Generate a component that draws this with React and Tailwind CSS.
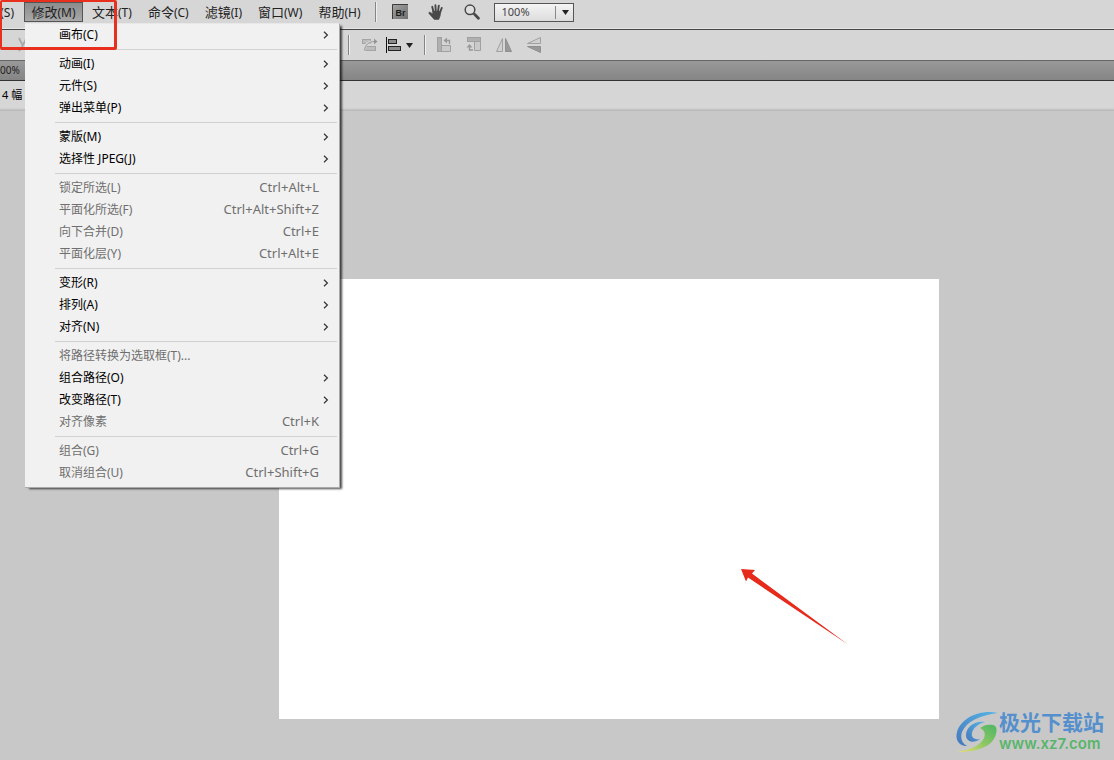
const menus = [
    ["文本", "(T)"],
    ["命令", "(C)"],
    ["滤镜", "(I)"],
    ["窗口", "(W)"],
    ["帮助", "(H)"],
];

const modifyGroups = [
    [{ label: "画布(C)", sub: true }],
    [
        { label: "动画(I)", sub: true },
        { label: "元件(S)", sub: true },
        { label: "弹出菜单(P)", sub: true },
    ],
    [
        { label: "蒙版(M)", sub: true },
        { label: "选择性 JPEG(J)", sub: true },
    ],
    [
        { label: "锁定所选(L)", keys: "Ctrl+Alt+L", disabled: true },
        { label: "平面化所选(F)", keys: "Ctrl+Alt+Shift+Z", disabled: true },
        { label: "向下合并(D)", keys: "Ctrl+E", disabled: true },
        { label: "平面化层(Y)", keys: "Ctrl+Alt+E", disabled: true },
    ],
    [
        { label: "变形(R)", sub: true },
        { label: "排列(A)", sub: true },
        { label: "对齐(N)", sub: true },
    ],
    [
        { label: "将路径转换为选取框(T)...", disabled: true },
        { label: "组合路径(O)", sub: true },
        { label: "改变路径(T)", sub: true },
        { label: "对齐像素", keys: "Ctrl+K", disabled: true },
    ],
    [
        { label: "组合(G)", keys: "Ctrl+G", disabled: true },
        { label: "取消组合(U)", keys: "Ctrl+Shift+G", disabled: true },
    ],
];

function MenuItem({ item }) {
    return (
        <button
            role="menuitem"
            disabled={item.disabled}
            className="flex h-[22px] w-full items-center justify-between pr-5 pl-[34px] text-black disabled:text-[#6f6f6f]"
        >
            <span>{item.label}</span>
            {item.keys && <span className="text-[13px]">{item.keys}</span>}
            {item.sub && (
                <svg width="6" height="8" viewBox="0 0 6 8" className="-mr-2.5" fill="none" stroke="#333" strokeWidth="1.2">
                    <path d="M1 .7 4.4 4 1 7.3" />
                </svg>
            )}
        </button>
    );
}

function ModifyMenu() {
    return (
        <div
            role="menu"
            className="absolute top-[21px] left-px z-20 w-[315px] border-t border-r border-b border-t-[#e8e8e8] border-r-[#aaa] border-b-[#aaa] bg-[#f1f1f1] pb-[3px] text-xs whitespace-nowrap shadow-[3px_2px_2px_-1px_rgba(0,0,0,0.7)]"
        >
            {modifyGroups.map((group, i) => (
                <div key={i}>
                    {i > 0 && <hr className="mt-[3px] mr-0.5 mb-[3px] ml-[30px] border-t border-[#d2d2d2]" />}
                    {group.map((item) => (
                        <MenuItem key={item.label} item={item} />
                    ))}
                </div>
            ))}
        </div>
    );
}

function Divider() {
    return <span className="h-5 w-0.5 border-r border-l border-r-[#efefef] border-l-[#858585]" />;
}

function BridgeIcon() {
    return (
        <svg width="16" height="16" viewBox="0 0 16 16">
            <defs>
                <linearGradient id="br" x1="0" y1="0" x2="1" y2="1">
                    <stop offset="0" stopColor="#a5a5a5" />
                    <stop offset="1" stopColor="#6f6f6f" />
                </linearGradient>
            </defs>
            <rect x="0" y="0" width="16" height="15" fill="url(#br)" />
            <path d="M.5 15V.5H16" fill="none" stroke="#3c3c3c" />
            <text x="3.5" y="11.5" fontSize="9" fontWeight="700" fontFamily="Liberation Sans, sans-serif" fill="#1c1c1c">
                Br
            </text>
        </svg>
    );
}

function HandIcon() {
    return (
        <svg width="16" height="16" viewBox="0 0 16 16" fill="none" stroke="#484848" strokeLinecap="round">
            <path d="M5.6 8 4.2 2.8M7.8 7.5 7.4 1.2M10 7.5l.8-5.8M12 8.5l1.8-4.6" strokeWidth="1.9" />
            <path d="M4.8 7.2h8l-.6 4.6-1.4 3.6H6.2L1 9.6c-.8-1 .5-1.8 1.4-1.2l2.4 1.5z" fill="#484848" strokeWidth=".6" />
        </svg>
    );
}

function MagnifierIcon() {
    return (
        <svg width="16" height="16" viewBox="0 0 16 16" fill="none" stroke="#474747">
            <circle cx="6" cy="5.8" r="4.8" fill="#dedede" strokeWidth="1.5" />
            <path d="m9.6 9.4 1.3 1.3" strokeWidth="1.6" />
            <path d="m10.8 10.6 3.6 3.6" strokeWidth="2.8" strokeLinecap="round" />
        </svg>
    );
}

function ScissorsIcon() {
    return (
        <svg width="8" height="16" viewBox="0 0 8 16" fill="none" stroke="#a8a8a8" strokeWidth="1.8">
            <path d="M1 1l4 8M8 2 4 10l-3 4" />
        </svg>
    );
}

function PathIcon() {
    return (
        <svg width="16" height="16" viewBox="0 0 16 16" fill="none" stroke="#a4a4a4">
            <rect x=".5" y="2.5" width="8" height="4" fill="#bcbcbc" />
            <rect x="3.5" y="9.5" width="10" height="4" fill="#bcbcbc" />
            <path d="M2 14C2.5 8 6 4.5 12 4.5" stroke="#d8d8d8" strokeWidth="2.5" />
            <path d="M2.5 13.5C3 8 6.5 4.5 13 4.5" stroke="#969696" />
            <path d="m12 1.5 3.5 3-3.5 3z" fill="#969696" stroke="none" />
        </svg>
    );
}

function AlignIcon() {
    return (
        <svg width="16" height="16" viewBox="0 0 16 16">
            <path d="M.5 0v16" stroke="#111" />
            <rect x="2.5" y="2.5" width="8" height="4" fill="#8b8b8b" stroke="#222" />
            <rect x="2.5" y="9.5" width="12" height="4" fill="#8b8b8b" stroke="#222" />
        </svg>
    );
}

function RotateRightIcon() {
    return (
        <svg width="16" height="16" viewBox="0 0 16 16" stroke="#a0a0a0">
            <rect x="1.5" y=".5" width="4" height="14" fill="#b0b0b0" />
            <path d="M5.5 8.5h9v6h-9z" fill="#cacaca" />
            <path d="M9.5 3.5h4V7" fill="none" stroke="#999" strokeWidth="1.4" />
            <path d="m7.5 3.5 3.5-3v6z" fill="#999" stroke="none" />
        </svg>
    );
}

function RotateLeftIcon() {
    return (
        <svg width="16" height="16" viewBox="0 0 16 16" stroke="#a0a0a0">
            <rect x="1.5" y=".5" width="13" height="4" fill="#b0b0b0" />
            <path d="M8.5 4.5h6v9h-6z" fill="#cacaca" />
            <path d="M3.5 9.5V13H7" fill="none" stroke="#999" strokeWidth="1.4" />
            <path d="m3.5 7 3 3.5h-6z" fill="#999" stroke="none" />
        </svg>
    );
}

function FlipHorizontalIcon() {
    return (
        <svg width="16" height="16" viewBox="0 0 16 16">
            <path d="M6.5 1.5v13h-6z" fill="#d0d0d0" stroke="#a0a0a0" />
            <path d="M9.5 1.5v13h6z" fill="#999" stroke="#8f8f8f" />
        </svg>
    );
}

function FlipVerticalIcon() {
    return (
        <svg width="16" height="16" viewBox="0 0 16 16">
            <path d="M14.5.5v6h-13z" fill="#d0d0d0" stroke="#a0a0a0" />
            <path d="M14.5 15.5v-6h-13z" fill="#999" stroke="#8f8f8f" />
        </svg>
    );
}

function Caret() {
    return (
        <svg width="7" height="5" viewBox="0 0 7 5">
            <path d="M0 0h7L3.5 5z" fill="#222" />
        </svg>
    );
}

function MenuBar() {
    return (
        <header className="flex h-[29px] items-start border-b border-[#e6e6e6] bg-[#d6d6d6] pt-px text-[13px] text-[#222]">
            <nav className="flex pt-px whitespace-nowrap">
                <button className="flex h-[22px] w-6 items-center justify-end pr-2.5 text-xs">(S)</button>
                <div className="relative">
                    <button className="h-[20px] w-[59px] border border-[#555] bg-linear-to-b from-[#8c8c8c] to-[#a8a8a8] leading-[18px]">
                        修改<span className="text-xs">(M)</span>
                    </button>
                    <ModifyMenu />
                </div>
                <div className="flex pl-px">
                    {menus.map(([name, key]) => (
                        <button key={name} className="h-[22px] px-2">
                            {name}
                            <span className="text-xs">{key}</span>
                        </button>
                    ))}
                </div>
            </nav>
            <div className="flex h-[22px] items-center pl-1.5">
                <Divider />
                <div className="flex items-center gap-5 pl-[15px]">
                    <button aria-label="Bridge"><BridgeIcon /></button>
                    <button aria-label="手形"><HandIcon /></button>
                    <button aria-label="缩放"><MagnifierIcon /></button>
                </div>
                <div className="relative ml-3.5">
                    <select
                        aria-label="缩放比例"
                        className="block h-[19px] w-20 appearance-none border border-[#555] bg-linear-to-b from-[#f4f4f4] to-[#dcdcdc] pl-[7px] text-[11px] leading-4 text-[#444]"
                    >
                        <option>100%</option>
                    </select>
                    <span className="pointer-events-none absolute top-[3px] right-[5px] flex h-[13px] items-center border-l border-[#888] pl-1.5">
                        <Caret />
                    </span>
                </div>
            </div>
        </header>
    );
}

function ToolBar() {
    return (
        <div className="flex h-8 items-center border-t border-b border-t-[#444] border-b-[#666] bg-[#d6d6d6] pl-[18px]">
            <button aria-label="剪切" className="mr-[322px]"><ScissorsIcon /></button>
            <Divider />
            <div className="flex items-center gap-2 pr-[11px] pl-3">
                <button aria-label="路径"><PathIcon /></button>
                <button aria-label="对齐" className="flex items-center gap-1"><AlignIcon /><Caret /></button>
            </div>
            <Divider />
            <div className="flex items-center gap-3.5 pl-2.5">
                <button aria-label="顺时针旋转"><RotateRightIcon /></button>
                <button aria-label="逆时针旋转"><RotateLeftIcon /></button>
                <button aria-label="水平翻转"><FlipHorizontalIcon /></button>
                <button aria-label="垂直翻转"><FlipVerticalIcon /></button>
            </div>
        </div>
    );
}

function Watermark() {
    return (
        <div className="absolute right-2.5 bottom-1.5 flex items-center">
            <svg width="44" height="44" viewBox="0 0 44 44">
                <defs>
                    <linearGradient id="swirlBlue" x1="0" y1="1" x2="1" y2="0">
                        <stop offset="0" stopColor="#4678bd" />
                        <stop offset="1" stopColor="#55b5e6" />
                    </linearGradient>
                    <linearGradient id="swirlGreen" x1="0" y1="1" x2="1" y2="0">
                        <stop offset="0" stopColor="#ebe06a" />
                        <stop offset=".5" stopColor="#8cc764" />
                        <stop offset="1" stopColor="#4cb564" />
                    </linearGradient>
                </defs>
                <path d="M43 3C25-1 6 8 2 22c-2 8 2 14 10 14-5-3-7-8-5-14C11 12 25 5 43 3z" fill="url(#swirlBlue)" />
                <path d="M30 12c-11-2-19 6-19 13 0 7 8 9 14 4-5 1-9-1-8-6 1-5 6-9 13-11z" fill="url(#swirlBlue)" />
                <path d="M25 18c4-3 8-4 13-3 4 1 4 5 3 9-3 12-17 18-39 18 14-2 24-7 27-14 2-5 0-8-4-10z" fill="url(#swirlGreen)" />
            </svg>
            <div className="flex flex-col">
                <span className="text-[21px] leading-6 font-bold text-[#5590cd]">极光下载站</span>
                <a href="#" className="font-['Inter',sans-serif] text-[15px] leading-5 font-semibold text-[#58b56b]">
                    www.xz7.com
                </a>
            </div>
        </div>
    );
}

export default function App() {
    return (
        <div className="relative flex min-h-screen flex-col overflow-hidden bg-[#c8c8c8] font-['Noto_Sans','Noto_Sans_CJK_SC',sans-serif]">
            <MenuBar />
            <ToolBar />
            <div className="flex h-5 items-center border-b border-[#333] bg-linear-to-b from-[#999] to-[#858585] text-[10px] text-[#222]">
                <span>00%</span>
            </div>
            <div className="flex h-[27px] items-center bg-[#d6d6d6] pt-px pl-0.5 text-[11px] text-black">4 幅</div>
            <div className="h-[3px] bg-linear-to-b from-[#d6d6d6] to-[#b4b4b4]" />
            <main className="flex justify-center pt-[168px] pb-10 pl-[104px]">
                <div className="h-[440px] w-[660px] bg-white">
                    <svg width="660" height="440" viewBox="0 0 660 440">
                        <path d="M462 290l14 1-3 3.500 96 71-100-67-2 4z" fill="#e62a1c" />
                    </svg>
                </div>
            </main>
            <Watermark />
            <div className="pointer-events-none absolute top-0 left-0 z-30 h-[50px] w-[117px] rounded-xs border-[3px] border-t-2 border-l-2 border-[#e8301f]" />
        </div>
    );
}
